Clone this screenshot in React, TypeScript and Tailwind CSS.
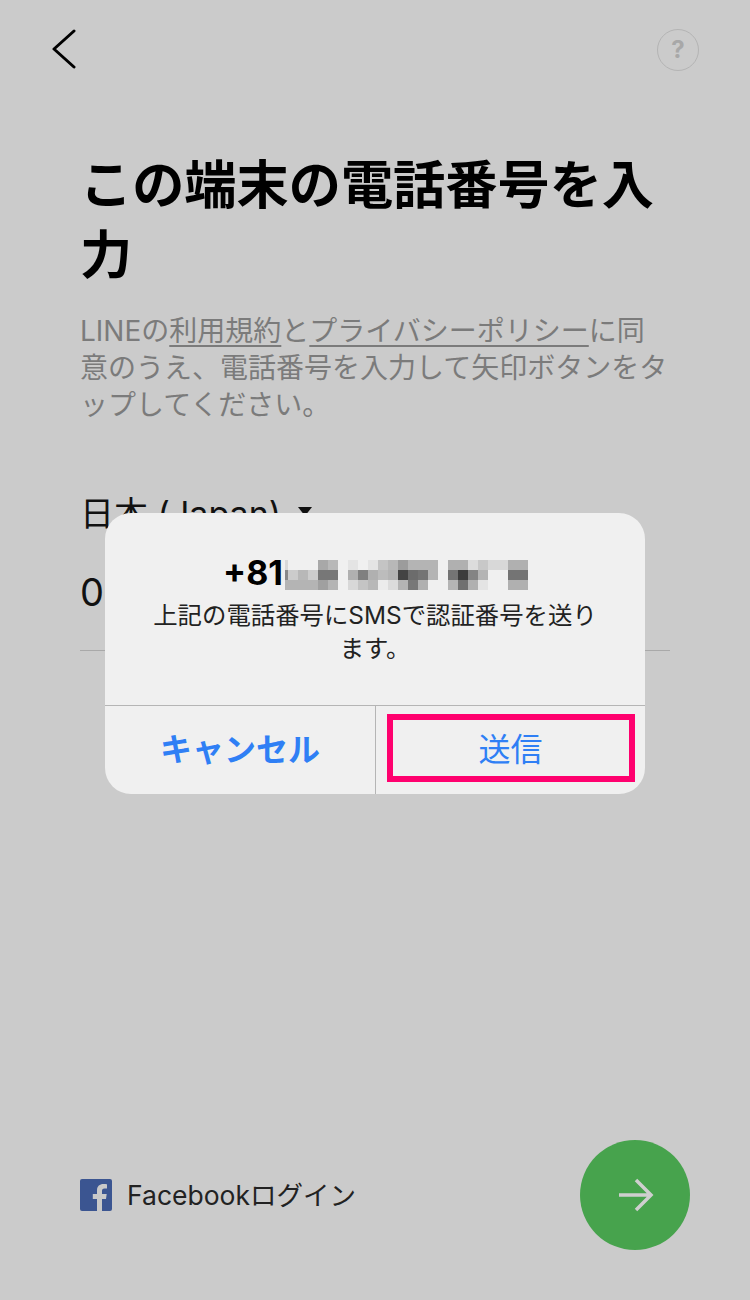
import React from "react";

const font = "font-['Inter','Noto_Sans_CJK_JP',sans-serif]";

// phone number mosaic, one array per group, rows of grey cells (10px each)
const mosaic: string[][][] = [
  [
    ["#d8d8d8", "#f0f0f0", "#f0f0f0", "#f0f0f0", "#a8a8a8", "#b8b8b8"],
    ["#888888", "#cccccc", "#b8b8b8", "#cccccc", "#777777", "#777777"],
    ["#b4b4b4", "#b4b4b4", "#b4b4b4", "#b4b4b4", "#a0a0a0", "#b4b4b4"],
  ],
  [
    ["#e4e4e4", "#f0f0f0", "#e4e4e4", "#c4c4c4", "#b8b8b8", "#9c9c9c", "#b4b4b4", "#b4b4b4", "#b4b4b4"],
    ["#b0b0b0", "#808080", "#b0b0b0", "#bcbcbc", "#b4b4b4", "#444444", "#6c6c6c", "#747474", "#b4b4b4"],
    ["#d8d8d8", "#c4c4c4", "#b8b8b8", "#ececec", "#dcdcdc", "#b4b4b4", "#787878", "#b0b0b0", "#f0f0f0"],
  ],
  [
    ["#b0b0b0", "#b0b0b0", "#dcdcdc", "#c8c8c8", "#d8d8d8", "#d8d8d8", "#b0b0b0", "#b0b0b0"],
    ["#747474", "#3c3c3c", "#848484", "#b4b4b4", "#f0f0f0", "#f0f0f0", "#747474", "#747474"],
    ["#b4b4b4", "#707070", "#b0b0b0", "#e4e4e4", "#f0f0f0", "#f0f0f0", "#b0b0b0", "#b0b0b0"],
  ],
];

const Mosaic: React.FC = () => (
  <div className="flex gap-[10px] mt-[4px] ml-[2px]">
    {mosaic.map((group, g) => (
      <div key={g} className="flex flex-col">
        {group.map((row, r) => (
          <div key={r} className="flex">
            {row.map((color, c) => (
              <div
                key={c}
                className={g === 0 && c === 0 ? "w-[3px] h-[10px]" : "w-[10px] h-[10px]"}
                style={{ backgroundColor: color }}
              />
            ))}
          </div>
        ))}
      </div>
    ))}
  </div>
);

const ConfirmDialog: React.FC = () => (
  <div className="absolute left-[105px] top-[513px] w-[540px] h-[281px] rounded-[26px] bg-[#f0f0f0] flex flex-col overflow-hidden">
    <div className="h-[192px] shrink-0 flex flex-col items-center pt-[42px]">
      <div className="flex items-center h-[36px] ml-[1px]">
        <span className="text-[34px] leading-[36px] font-bold text-black">+81</span>
        <Mosaic />
      </div>
      <p className="w-[452px] text-center text-[24.400px] leading-[33px] text-[#222] mt-[8px]">
        上記の電話番号にSMSで認証番号を送ります。
      </p>
    </div>
    <div className="flex flex-1 border-t border-[#b5b5b5]">
      <div className="w-[271px] border-r border-[#b5b5b5] flex items-center justify-center text-[32px] font-bold text-[#2f7ff5]">
        キャンセル
      </div>
      <div className="flex-1 flex items-center justify-center text-[32px] text-[#2f7ff5]">送信</div>
    </div>
  </div>
);

const App: React.FC = () => {
  return (
    <div lang="ja" className={`${font} relative w-[750px] h-[1300px] bg-[#cbcbcb] flex flex-col overflow-hidden`}>
      {/* Top bar */}
      <div className="flex items-center justify-between pl-[50px] pr-[51px] pt-[29px]">
        <svg width="26" height="42" viewBox="0 0 26 42" fill="none">
          <path d="M24 2 L4 20 L24 38" stroke="#000" strokeWidth="3" strokeLinecap="round" strokeLinejoin="round" />
        </svg>
        <div className="w-[42px] h-[42px] rounded-full border border-[#b4b4b4] flex items-center justify-center text-[24px] leading-none font-bold text-[#a8a8a8]">
          ?
        </div>
      </div>

      <main className="pl-[80px] pr-[80px] pt-[79px] flex-1">
        <h1 className="text-[52.200px] leading-[70px] font-bold text-black">この端末の電話番号を入力</h1>
        <p className="mt-[23px] text-[28px] leading-[37px] text-[#7b7b7b]">
          LINEの<span className="underline underline-offset-4">利用規約</span>と
          <span className="underline underline-offset-4">プライバシーポリシー</span>
          に同意のうえ、電話番号を入力して矢印ボタンをタップしてください。
        </p>

        <div className="mt-[67px] flex items-center gap-[17px] text-[34px] leading-[46px] text-[#111]">
          日本 (Japan)
          <span className="-mt-[5px] w-0 h-0 border-l-[7px] border-r-[7px] border-t-[9px] border-l-transparent border-r-transparent border-t-[#111]" />
        </div>
        <div className="mt-[32px] text-[38px] leading-[46px] text-[#111]">0</div>
        <div className="mt-[35px] h-px w-[590px] bg-[#a9a9a9]" />
      </main>

      {/* Bottom row */}
      <div className="flex items-center justify-between pl-[80px] pr-[60px] pb-[50px]">
        <div className="flex items-center gap-[15px]">
          <svg width="32" height="32" viewBox="0 0 32 32">
            <rect width="32" height="32" rx="2" fill="#3b5591" />
            <path d="M22 32V20h4l.7-5H22v-3c0-1.500.5-2.400 2.500-2.400H27V5.200C26.500 5.100 25 5 23.400 5 19.800 5 17 7.200 17 11.300V15h-4.200v5H17v12z" fill="#c9c9c9" />
          </svg>
          <span className="text-[26.500px] leading-none text-[#222]">Facebookログイン</span>
        </div>
        <div className="w-[110px] h-[110px] rounded-full bg-[#47a34d] flex items-center justify-center">
          <svg width="36" height="34" viewBox="0 0 36 34" fill="none" className="ml-[2px]">
            <path d="M1 17H33M18 2l15 15-15 15" stroke="#cfcfcf" strokeWidth="3.500" />
          </svg>
        </div>
      </div>

      <ConfirmDialog />

      {/* Pink highlight box */}
      <div className="absolute left-[387px] top-[714px] w-[248px] h-[68px] border-[6px] border-[#ff006e]" />
    </div>
  );
};

export default App;
